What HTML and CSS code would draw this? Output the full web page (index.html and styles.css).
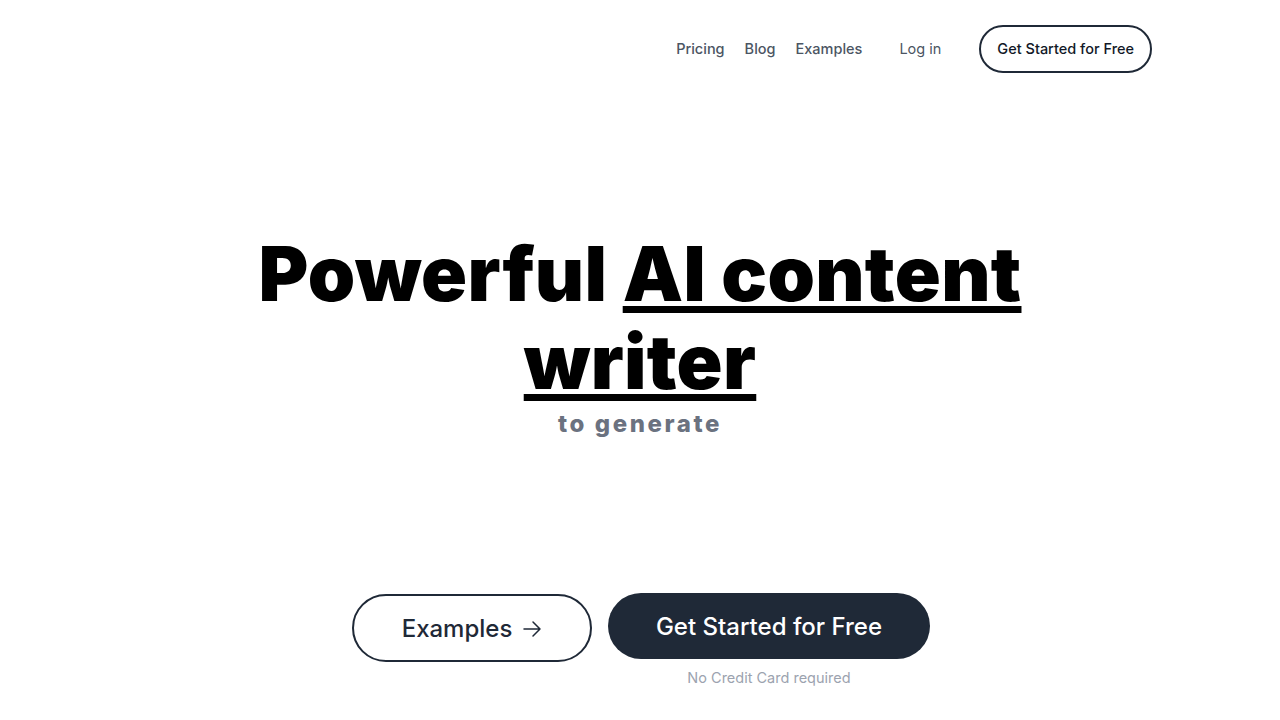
FILE: index.html
```html
<!DOCTYPE html>
<html lang="en">
<head>
<meta charset="utf-8">
<title>AI content writer</title>
<link rel="stylesheet" href="styles.css">
</head>
<body>
<header class="header">
  <nav class="nav">
    <a class="nav-link" href="#">Pricing</a>
    <a class="nav-link" href="#">Blog</a>
    <a class="nav-link" href="#">Examples</a>
    <a class="nav-login" href="#">Log in</a>
    <a class="nav-cta" href="#">Get Started for Free</a>
  </nav>
</header>
<main class="hero">
  <h1 class="title">Powerful <span class="u">AI content<br>writer</span></h1>
  <p class="sub">to generate</p>
  <div class="actions">
    <a class="btn btn-outline" href="#">Examples
      <svg class="arrow" width="20" height="20" viewBox="0 0 20 20" fill="none" stroke="currentColor" stroke-width="1.5" stroke-linecap="round" stroke-linejoin="round"><path d="M2 10h16M11 3l7 7-7 7"/></svg>
    </a>
    <div class="cta-col">
      <a class="btn btn-dark" href="#">Get Started for Free</a>
      <span class="note">No Credit Card required</span>
    </div>
  </div>
</main>
</body>
</html>
```

FILE: styles.css
```css
* { box-sizing: border-box; }
html, body { margin: 0; padding: 0; background: #fff; }
body {
  font-family: "Inter", "Lato", "Noto Sans", sans-serif;
  color: #111827;
  width: 1280px;
  height: 720px;
  overflow: hidden;
}
a { text-decoration: none; color: inherit; }

.header {
  height: 97px;
  display: flex;
  justify-content: flex-end;
  align-items: center;
  padding-right: 128px;
}
.nav { display: flex; align-items: center; }
.nav-link {
  font-size: 14.5px;
  font-weight: 500;
  color: #4b5563;
  margin-right: 20px;
}
.nav-link:nth-child(3) { margin-right: 37px; }
.nav-login {
  font-size: 14.5px;
  font-weight: 400;
  color: #4b5563;
  margin-right: 38px;
}
.nav-cta {
  display: flex;
  align-items: center;
  height: 48px;
  padding: 0 16px;
  border: 2px solid #1f2937;
  border-radius: 999px;
  font-size: 14.5px;
  font-weight: 500;
  color: #111827;
}

.hero {
  display: flex;
  flex-direction: column;
  align-items: center;
  padding-top: 132px;
}
.title {
  margin: 0;
  text-align: center;
  font-size: 76px;
  line-height: 88px;
  font-weight: 900;
  color: #000;
  letter-spacing: 0.3px;
}
.u {
  text-decoration: underline;
  text-decoration-thickness: 7px;
  text-underline-offset: 5px;
}
.sub {
  margin: 0;
  margin-top: 3px;
  font-size: 24px;
  line-height: 32px;
  font-weight: 800;
  letter-spacing: 2.6px;
  color: #6b7280;
}
.actions {
  display: flex;
  align-items: flex-start;
  gap: 16px;
  margin-top: 154px;
  margin-left: 2px;
}
.btn {
  display: flex;
  align-items: center;
  justify-content: center;
  border-radius: 999px;
  font-size: 24px;
  font-weight: 500;
}
.btn-outline {
  width: 240px;
  height: 68px;
  border: 2px solid #1f2937;
  color: #1f2937;
  gap: 10px;
}
.arrow { margin-top: 1px; }
.cta-col { display: flex; flex-direction: column; align-items: center; }
.btn-dark {
  width: 322px;
  height: 66px;
  background: #1f2937;
  color: #fff;
  margin-top: -1px;
}
.note {
  margin-top: 10px;
  font-size: 14.5px;
  color: #9ca3af;
}
```
